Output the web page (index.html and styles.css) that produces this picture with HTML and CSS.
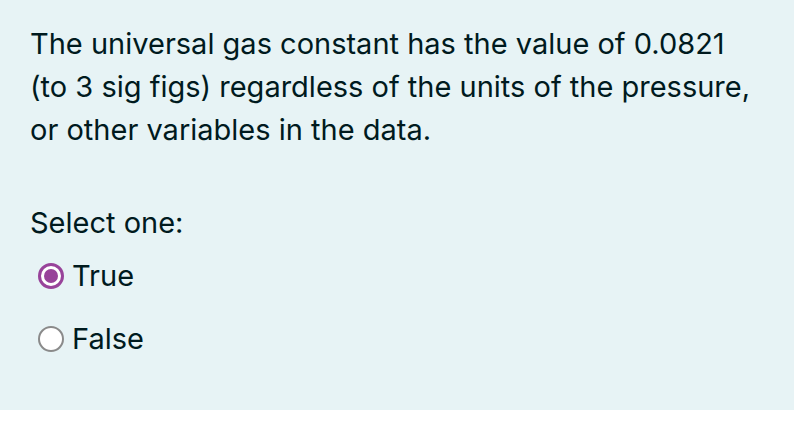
FILE: index.html
```html
<!DOCTYPE html>
<html>
<head>
<meta charset="utf-8">
<link rel="stylesheet" href="styles.css">
</head>
<body>
<div class="que">
  <div class="qtext">The universal gas constant has the value of 0.0821 (to 3 sig figs) regardless of the units of the pressure, or other variables in the data.</div>
  <div class="ablock">
    <div class="prompt">Select one:</div>
    <div class="answer">
      <label class="opt">
        <span class="radio checked"><span class="dot"></span></span>
        <span class="label">True</span>
      </label>
      <label class="opt">
        <span class="radio"></span>
        <span class="label">False</span>
      </label>
    </div>
  </div>
</div>
</body>
</html>
```

FILE: styles.css
```css
html, body {
  margin: 0;
  padding: 0;
  background: #ffffff;
}
body {
  font-family: Inter, "Noto Sans", "Liberation Sans", sans-serif;
  color: #001a1e;
}
.que {
  background: #e7f3f5;
  height: 410px;
  box-sizing: border-box;
  padding: 22px 30px 0 30px;
}
.qtext {
  font-size: 29px;
  line-height: 43px;
  width: 730px;
}
.ablock {
  margin-top: 50px;
}
.prompt {
  font-size: 29px;
  line-height: 43px;
}
.answer {
  margin-top: 10px;
  display: flex;
  flex-direction: column;
  gap: 20px;
}
.opt {
  display: flex;
  align-items: center;
  gap: 8px;
  padding-left: 8px;
  font-size: 29px;
  line-height: 43px;
}
.radio {
  width: 26px;
  height: 26px;
  box-sizing: border-box;
  border-radius: 50%;
  border: 2px solid #8a8a8a;
  background: #ffffff;
  display: flex;
  align-items: center;
  justify-content: center;
}
.radio.checked {
  border: 3px solid #98439a;
}
.dot {
  width: 14px;
  height: 14px;
  border-radius: 50%;
  background: #98439a;
}
```
